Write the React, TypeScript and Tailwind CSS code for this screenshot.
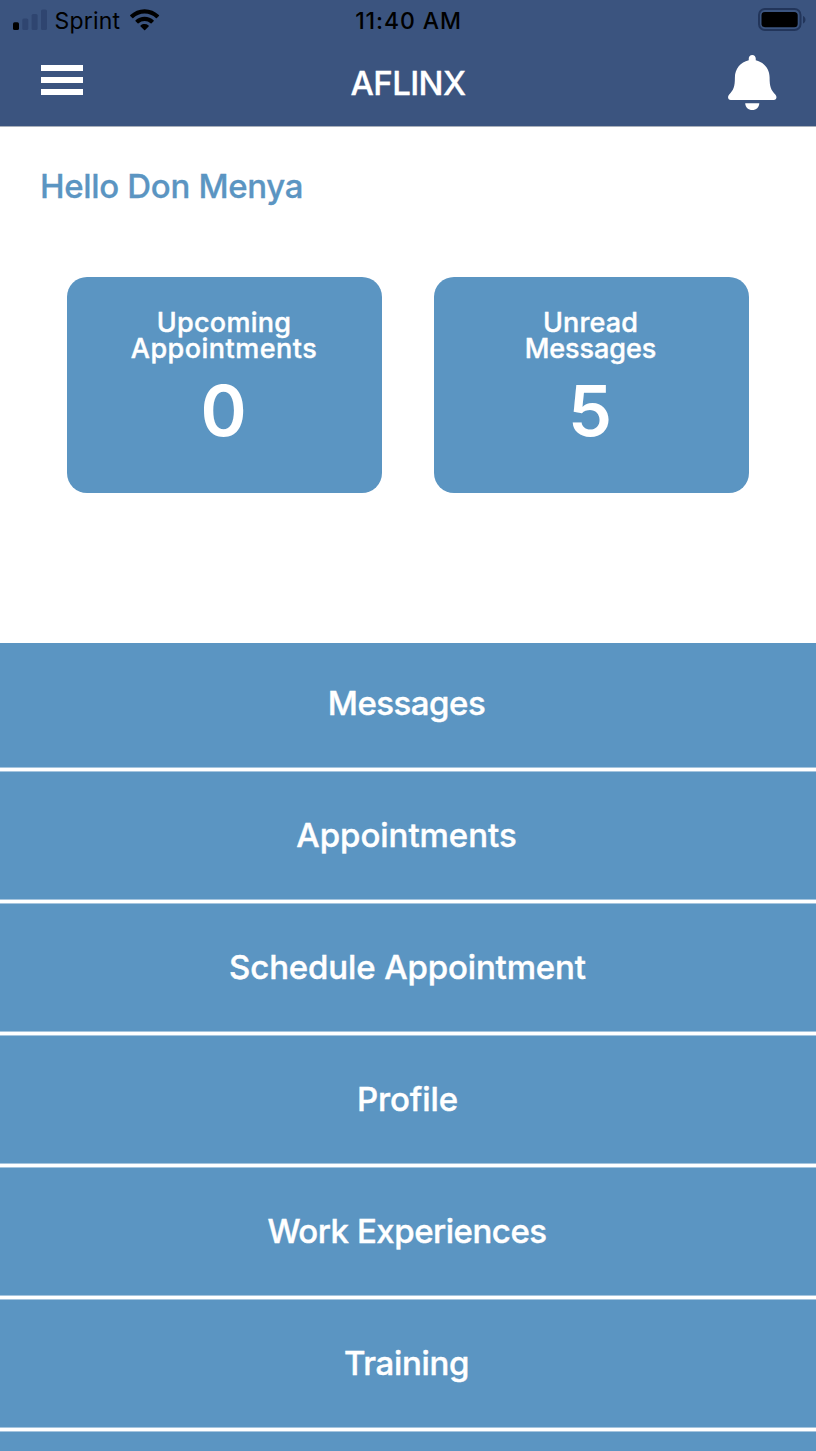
const menu = [
  { label: "Messages", tracking: "tracking-[-0.5px]", nudge: "pr-[3px]" },
  { label: "Appointments", tracking: "tracking-[-0.04px]", nudge: "pr-[3px]" },
  { label: "Schedule Appointment", tracking: "tracking-[-0.14px]", nudge: "pr-[1px]" },
  { label: "Profile", tracking: "tracking-[-0.12px]", nudge: "pr-[1px]" },
  { label: "Work Experiences", tracking: "tracking-[-0.48px]", nudge: "pr-[2px]" },
  { label: "Training", tracking: "tracking-[-0.33px]", nudge: "pr-[3px]" },
];

function SignalIcon() {
  return (
    <svg width="34" height="22" viewBox="0 0 34 22" className="shrink-0">
      <rect x="0" y="13.2" width="6" height="7.8" rx="1.6" fill="#000" />
      <rect x="9.3" y="9.5" width="6" height="11.5" rx="1.6" fill="#2f4570" />
      <rect x="18.6" y="5" width="6" height="16" rx="1.6" fill="#2f4570" />
      <rect x="28" y="0.6" width="6" height="20.4" rx="1.6" fill="#2f4570" />
    </svg>
  );
}

function WifiIcon() {
  return (
    <svg width="30" height="23" viewBox="0 0 30 23" className="shrink-0">
      <path d="M14.6 0.3C9 0.3 4 2.5 0.3 6.1q-.5.5 0 1l2 2q.5.5 1 0a16.2 16.2 0 0 1 22.6 0q.5.5 1 0l2-2q.5-.5 0-1C25.2 2.5 20.2.3 14.6.3Z" />
      <path d="M14.6 7.7c-3.5 0-6.7 1.4-9 3.6q-.6.5 0 1l2 2q.5.5 1 0a8.9 8.9 0 0 1 12 0q.5.5 1 0l2-2q.6-.5 0-1c-2.3-2.2-5.5-3.6-9-3.6Z" />
      <path d="M14.6 15c-1.5 0-2.9.5-4 1.4q-.6.5 0 1.1l3.5 3.6q.5.5 1 0l3.5-3.6q.6-.6 0-1.1a6.3 6.3 0 0 0-4-1.4Z" />
    </svg>
  );
}

function BatteryIcon() {
  return (
    <svg width="48" height="24" viewBox="0 0 48 24" className="shrink-0">
      <rect x="1" y="1" width="41.5" height="21" rx="6" fill="none" stroke="#22355a" strokeWidth="2" />
      <rect x="3.5" y="4" width="36.2" height="15.2" rx="3.5" fill="#000" />
      <path d="M45 8v7.5c1.5-.6 2.5-2 2.5-3.75S46.5 8.6 45 8Z" fill="#22355a" />
    </svg>
  );
}

function BellIcon() {
  return (
    <svg width="49" height="56" viewBox="0 0 49 56" fill="#fff">
      <path d="M24.25 0c-2.1 0-3.5 1.6-3.5 3.5v1.7C12.5 7.2 6.9 13.7 6.9 22.5c0 9.2-1.3 12.5-5.9 17.3C-.9 42 .2 44.9 2.7 44.9h43.1c2.5 0 3.6-2.9 1.7-5.1-4.6-4.8-5.9-8.1-5.9-17.3 0-8.8-5.6-15.3-13.85-17.3V3.5c0-1.9-1.4-3.5-3.5-3.5Z" />
      <path d="M17.2 48.2h14.1c-.2 4-3.1 6.8-7.05 6.8s-6.85-2.8-7.05-6.8Z" />
    </svg>
  );
}

function StatCard({ top, bottom, value, topTracking, bottomTracking }: { top: string; bottom: string; value: string; topTracking: string; bottomTracking: string }) {
  return (
    <section className="flex h-[216px] w-[315px] flex-col items-center rounded-[20px] bg-[#5b95c2] pt-[33px] pr-px text-white">
      <h3 className="flex flex-col items-center text-[27px] leading-[26px] font-medium [-webkit-text-stroke:0.4px]">
        <span className={topTracking}>{top}</span>
        <span className={bottomTracking}>{bottom}</span>
      </h3>
      <span className="mt-[14px] pr-px text-[70px] leading-[70px] font-semibold">{value}</span>
    </section>
  );
}

export default function App() {
  return (
    <div className="flex h-[1451px] w-[816px] flex-col overflow-hidden bg-white font-['Inter',sans-serif]">
      <header className="h-[127px] shrink-0 border-b border-[#a9b0bb] bg-[#3b547f]">
        <div className="grid h-10 grid-cols-[1fr_auto_1fr] items-center text-[23px] leading-10 text-black">
          <div className="flex items-center pl-[13px]">
            <SignalIcon />
            <span className="ml-[7.5px] pt-[2px] leading-[38px] tracking-[0.2px]">Sprint</span>
            <span className="ml-[10px]"><WifiIcon /></span>
          </div>
          <span className="pt-[2px] pl-px leading-[38px] font-medium tracking-[0.9px]">11:40 AM</span>
          <div className="flex justify-end pr-[10px]"><BatteryIcon /></div>
        </div>
        <div className="grid h-[86px] grid-cols-[1fr_auto_1fr] items-center">
          <button aria-label="Menu" className="mb-[7px] ml-[41px] flex w-[42px] flex-col gap-[6px]">
            <span className="h-[6px] w-full bg-white" />
            <span className="h-[6px] w-full bg-white" />
            <span className="h-[6px] w-full bg-white" />
          </button>
          <h1 className="text-[33px] leading-[86px] font-medium tracking-[-0.6px] text-white [-webkit-text-stroke:0.3px]">AFLINX</h1>
          <button aria-label="Notifications" className="mr-[39px] justify-self-end"><BellIcon /></button>
        </div>
      </header>

      <main className="flex grow flex-col">
        <h2 className="mt-[39px] ml-[40px] text-[33px] leading-10 font-medium tracking-[-0.33px] text-[#5b95c2] [-webkit-text-stroke:0.3px]">Hello Don Menya</h2>
        <div className="mt-[71px] ml-[67px] flex gap-[51.5px]">
          <StatCard top="Upcoming" bottom="Appointments" value="0" topTracking="tracking-[0.25px]" bottomTracking="tracking-[0.48px]" />
          <StatCard top="Unread" bottom="Messages" value="5" topTracking="tracking-[0.15px]" bottomTracking="tracking-[-0.05px]" />
        </div>

        <nav className="mt-[150px] flex flex-col">
          {menu.map((item, i) => (
            <div key={item.label}>
              <button
                className={`flex w-full items-center justify-center bg-[#5b95c2] text-[33px] leading-10 font-medium text-white [-webkit-text-stroke:0.4px] ${item.tracking} ${item.nudge} ${i === 0 ? "h-[124px] pb-1" : "h-[127px] pb-[1px]"}`}
              >
                {item.label}
              </button>
              <div className="h-[5px] border-y border-[#a6c5de] bg-white" />
            </div>
          ))}
          <div className="h-[30px] bg-[#5b95c2]" />
        </nav>
      </main>
    </div>
  );
}
